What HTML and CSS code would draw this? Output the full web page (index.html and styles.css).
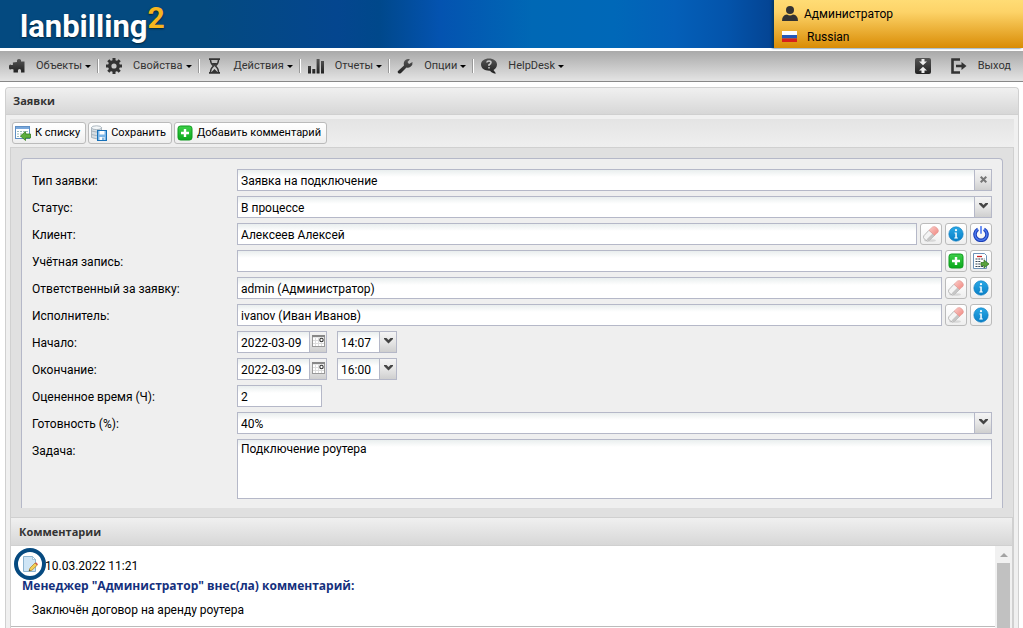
FILE: index.html
```html
<!DOCTYPE html>
<html lang="ru">
<head>
<meta charset="utf-8">
<title>Заявки</title>
<link rel="stylesheet" href="styles.css">
</head>
<body>
<svg class="defs" width="0" height="0" aria-hidden="true">
  <defs>
    <linearGradient id="pink" x1="0" y1="0" x2="1" y2="1"><stop offset="0" stop-color="#fbd0cc"/><stop offset="1" stop-color="#f0837c"/></linearGradient>
    <linearGradient id="blue" x1="0" y1="0" x2="0" y2="1"><stop offset="0" stop-color="#2aa9e6"/><stop offset="1" stop-color="#0a7fc6"/></linearGradient>
    <linearGradient id="green" x1="0" y1="0" x2="0" y2="1"><stop offset="0" stop-color="#3fd04a"/><stop offset="1" stop-color="#0aa81c"/></linearGradient>
    <linearGradient id="dark" x1="0" y1="0" x2="0" y2="1"><stop offset="0" stop-color="#555"/><stop offset="1" stop-color="#222"/></linearGradient>
    <symbol id="eraser" viewBox="0 0 16 16">
      <ellipse cx="7" cy="14.500" rx="6" ry="1.300" fill="#ccc" opacity=".7"/>
      <path d="M.8 9.800 6 4.200 11.500 9.500 6.500 14.300Q4.500 15.800 2 13.800-.5 11.500.8 9.800Z" fill="#f4f4f4" stroke="#aaa" stroke-width=".8"/>
      <path d="M3.500 13.500 9.500 7.500 11.500 9.500 6.500 14.300Q5 15.200 3.500 13.500Z" fill="#c6c6c6"/>
      <path d="M6 4.200 9.500 1Q11.500-.3 14 2 16.300 4.500 15 6.200L11.500 9.500Z" fill="url(#pink)" stroke="#e29a96" stroke-width=".6"/>
    </symbol>
    <symbol id="info" viewBox="0 0 16 16">
      <circle cx="8" cy="8" r="7.200" fill="url(#blue)" stroke="#0a78bd" stroke-width=".6"/>
      <circle cx="8" cy="4.200" r="1.100" fill="#fff"/><path d="M6.500 6.500H8.800V11.500H9.800V12.500H6.300V11.500H7.300V7.500H6.500Z" fill="#fff"/>
    </symbol>
    <symbol id="power" viewBox="0 0 16 16">
      <path d="M5 3.200A6 6 0 1 0 11 3.200" fill="none" stroke="#1c3fb8" stroke-width="3.600"/>
      <path d="M5 3.200A6 6 0 1 0 11 3.200" fill="none" stroke="#4d7cf0" stroke-width="1.400"/>
      <path d="M8 .8V7" stroke="#6f93f5" stroke-width="2" stroke-linecap="round"/>
    </symbol>
    <symbol id="plus" viewBox="0 0 16 16">
      <rect x="1" y="1" width="14" height="14" rx="2.500" fill="url(#green)" stroke="#0f9a1e"/>
      <path d="M8 4V12M4 8H12" stroke="#fff" stroke-width="2.400"/>
    </symbol>
    <symbol id="report" viewBox="0 0 16 16">
      <path d="M.5.5H11.500L13.500 2.500V15.500H.5Z" fill="#fff" stroke="#6e92b8"/>
      <path d="M4 3.500H9" stroke="#c22" stroke-width="1.300"/>
      <path d="M2.500 6H11.500M2.500 8.500H8M2.500 11H8M2.500 13.500H11" stroke="#345" stroke-width="1.100" stroke-dasharray="2 .8"/>
      <path d="M8 9.500H11V7L16 11 11 15V12.500H8Z" fill="#5aa33d" stroke="#2c6f1b" stroke-width=".7"/>
    </symbol>
    <symbol id="chev" viewBox="0 0 9 6"><path d="M0 0H2.500L4.500 2 6.500 0H9V1L4.500 5.500 0 1Z" fill="#444"/></symbol>
    <symbol id="cal" viewBox="0 0 13 12">
      <rect x=".5" y=".5" width="12" height="11" fill="#fff" stroke="#999"/><path d="M0 1H13" stroke="#888" stroke-width="2.400"/>
      <path d="M3.500 3V11M6.500 3V11M1 5.500H7M1 8.500H12M9.500 8V11" stroke="#ddd"/>
      <circle cx="9.500" cy="5" r="1.700" fill="#fff" stroke="#333" stroke-width="1.100"/>
    </symbol>
  </defs>
</svg>

<header class="banner">
  <div class="logo">lanbilling<span class="logo-two">2</span></div>
  <div class="account">
    <div class="account-row">
      <svg class="account-icon" viewBox="0 0 16 15"><circle cx="8" cy="4" r="4" fill="#333"/><path d="M0 15Q0 9 5 8.500 8 10.500 11 8.500 16 9 16 15Z" fill="#333"/></svg>
      <span>Администратор</span>
    </div>
    <div class="account-row">
      <svg class="account-icon" viewBox="0 0 16 15"><path d="M0 2H15V6H0Z" fill="#fff"/><path d="M0 6H15V9.500H0Z" fill="#2458b8"/><path d="M0 9.500H15V13H0Z" fill="#d8201c"/></svg>
      <span class="language">Russian</span>
    </div>
  </div>
</header>

<nav class="menu">
  <button class="menu-item" type="button"><svg class="menu-icon" viewBox="0 0 16 16"><path d="M0 8Q0 6.500 1.500 6.500 3 7.500 4 6.500L3.800 4.500 8 4Q7.500 1 10 1 12.500 1 12 3.500L15.500 3.500V14.500H12Q12.500 11 10.500 11 8.500 11 9 14.500H4.500L4.500 11.500Q3 10.500 1.500 11.500 0 11.500 0 10Z" fill="url(#dark)"/></svg>Объекты<i class="caret"></i></button>
  <button class="menu-item" type="button"><svg class="menu-icon" viewBox="0 0 16 16"><circle cx="8" cy="8" r="4.300" fill="none" stroke="#333" stroke-width="3.400"/><path d="M8 0V3M8 13V16M0 8H3M13 8H16M2.300 2.300 4.500 4.500M11.500 11.500 13.700 13.700M2.300 13.700 4.500 11.500M11.500 4.500 13.700 2.300" stroke="#333" stroke-width="3"/></svg>Свойства<i class="caret"></i></button>
  <button class="menu-item" type="button"><svg class="menu-icon" viewBox="-2 0 16 16"><path d="M0 1.200H11M0 14.800H11" stroke="#333" stroke-width="1.800"/><path d="M1.500 2Q1.500 5.500 4.500 8 1.500 10.500 1.500 14M9.500 2Q9.500 5.500 6.500 8 9.500 10.500 9.500 14" fill="none" stroke="#333" stroke-width="1.400"/><path d="M2.500 5H8.500L5.500 8ZM2.500 14 5.500 11 8.500 14Z" fill="#333"/></svg>Действия<i class="caret"></i></button>
  <button class="menu-item" type="button"><svg class="menu-icon" viewBox="0 0 16 16"><path d="M0 8H3V15.500H0ZM4.300 11H7.300V15.500H4.300ZM8.600 1H11.600V15.500H8.600ZM13 3H16V15.500H13Z" fill="url(#dark)"/></svg>Отчеты<i class="caret"></i></button>
  <button class="menu-item" type="button"><svg class="menu-icon" viewBox="0 0 16 16"><path d="M1 13 7 7.500Q6 4 8.500 2 10.500.5 13 1.300L10.500 4 12 6 15.500 4Q16 7 13.500 8.700 11.500 10 9.500 9.500L4 15Q2.500 16 1.200 15 0 14 1 13Z" fill="url(#dark)"/></svg>Опции<i class="caret"></i></button>
  <button class="menu-item" type="button"><svg class="menu-icon" viewBox="0 0 16 16"><path d="M8 .5C12.500.5 16 3 16 6.500 16 9 14.500 11 12.500 12L15 15.500Q11 15.500 9 12.700C4 13 0 10.500 0 6.500 0 3 3.500.5 8 .5Z" fill="url(#dark)"/><path d="M5.800 4.500Q6 3 8 3 10 3 10 4.600 10 6 8 6.800V8M8 9V10.500" fill="none" stroke="#ccc" stroke-width="1.500"/></svg>HelpDesk<i class="caret"></i></button>
  <span class="menu-space"></span>
  <button class="menu-tool" type="button" aria-label="Свернуть"><svg class="menu-icon" viewBox="0 0 16 16"><rect width="16" height="16" rx="2" fill="url(#dark)"/><path d="M6.500 1H9.500V3.500H12L8 7.300 4 3.500H6.500ZM6.500 15H9.500V12.500H12L8 8.700 4 12.500H6.500Z" fill="#eee"/></svg></button>
  <button class="menu-tool" type="button"><svg class="menu-icon" viewBox="0 0 16 16"><path d="M9 1.500H1.500V14.500H9" fill="none" stroke="#333" stroke-width="2.600"/><path d="M5 6.800H10.500V4L15.500 8 10.500 12V9.200H5Z" fill="#333"/></svg>Выход</button>
</nav>

<main class="panel">
  <h1 class="panel-title">Заявки</h1>
  <div class="panel-body">
    <div class="toolbar">
      <button class="btn" type="button"><svg class="icon" viewBox="0 0 16 16"><rect x=".5" y="1.500" width="14" height="12" fill="#fff" stroke="#5f8fc4"/><path d="M1 3H14" stroke="#79a8dc" stroke-width="2"/><path d="M2 6.500H13M2 9H12M2 11.500H8" stroke="#9bb" stroke-dasharray="2 1"/><path d="M5.500 11 10.500 6.500V9H15.500V13H10.500V15.500Z" fill="#5cae3e" stroke="#347f20" stroke-width=".8"/></svg>К списку</button>
      <button class="btn" type="button"><svg class="icon" viewBox="0 0 16 16"><path d="M.5 2.500V12.500Q5 15 10.500 12.500V2.500Z" fill="#d5dde3" stroke="#9aa8b2" stroke-width=".8"/><ellipse cx="5.500" cy="2.700" rx="5" ry="1.900" fill="#f4f7f9" stroke="#9aa8b2" stroke-width=".8"/><path d="M.5 6Q5 8 10.500 6M.5 9.500Q5 11.500 10.500 9.500" fill="none" stroke="#9aa8b2" stroke-width=".8"/><rect x="6.500" y="5.500" width="9" height="10" fill="#7db7e8" stroke="#1670b8"/><path d="M8.500 6H13.500V9.500H8.500ZM8.500 12H13.500V15H8.500Z" fill="#fff"/><path d="M11.500 12.500H12.500V15H11.500Z" fill="#1670b8"/></svg>Сохранить</button>
      <button class="btn" type="button"><svg class="icon"><use href="#plus"/></svg>Добавить комментарий</button>
    </div>

    <div class="form-area">
      <form class="form">
        <label class="label" for="type">Тип заявки:</label>
        <div class="row"><div class="combo"><input class="input" id="type" value="Заявка на подключение"><button class="trigger" type="button" aria-label="Очистить"><svg width="7" height="7" viewBox="0 0 7 7"><path d="M.7.7 6.300 6.300M6.300.7.7 6.300" stroke="#777" stroke-width="2"/></svg></button></div></div>

        <label class="label" for="status">Статус:</label>
        <div class="row"><div class="combo"><select class="input" id="status"><option>В процессе</option></select><span class="trigger"><svg width="9" height="6"><use href="#chev"/></svg></span></div></div>

        <label class="label" for="client">Клиент:</label>
        <div class="row"><input class="input" id="client" value="Алексеев Алексей"><button class="btn-icon" type="button" aria-label="Очистить"><svg class="icon"><use href="#eraser"/></svg></button><button class="btn-icon" type="button" aria-label="Информация"><svg class="icon"><use href="#info"/></svg></button><button class="btn-icon" type="button" aria-label="Состояние"><svg class="icon"><use href="#power"/></svg></button></div>

        <label class="label" for="acc">Учётная запись:</label>
        <div class="row"><input class="input" id="acc"><button class="btn-icon" type="button" aria-label="Добавить"><svg class="icon"><use href="#plus"/></svg></button><button class="btn-icon" type="button" aria-label="Перейти"><svg class="icon"><use href="#report"/></svg></button></div>

        <label class="label" for="resp">Ответственный за заявку:</label>
        <div class="row"><input class="input" id="resp" value="admin (Администратор)"><button class="btn-icon" type="button" aria-label="Очистить"><svg class="icon"><use href="#eraser"/></svg></button><button class="btn-icon" type="button" aria-label="Информация"><svg class="icon"><use href="#info"/></svg></button></div>

        <label class="label" for="exec">Исполнитель:</label>
        <div class="row"><input class="input" id="exec" value="ivanov (Иван Иванов)"><button class="btn-icon" type="button" aria-label="Очистить"><svg class="icon"><use href="#eraser"/></svg></button><button class="btn-icon" type="button" aria-label="Информация"><svg class="icon"><use href="#info"/></svg></button></div>

        <label class="label" for="start">Начало:</label>
        <div class="row row-times"><div class="combo date"><input class="input" id="start" value="2022-03-09"><button class="trigger" type="button" aria-label="Календарь"><svg width="13" height="12"><use href="#cal"/></svg></button></div><div class="combo time"><select class="input" aria-label="Время начала"><option>14:07</option></select><span class="trigger"><svg width="9" height="6"><use href="#chev"/></svg></span></div></div>

        <label class="label" for="end">Окончание:</label>
        <div class="row row-times"><div class="combo date"><input class="input" id="end" value="2022-03-09"><button class="trigger" type="button" aria-label="Календарь"><svg width="13" height="12"><use href="#cal"/></svg></button></div><div class="combo time"><select class="input" aria-label="Время окончания"><option>16:00</option></select><span class="trigger"><svg width="9" height="6"><use href="#chev"/></svg></span></div></div>

        <label class="label" for="hours">Оцененное время (Ч):</label>
        <div class="row"><input class="input hours" id="hours" value="2"></div>

        <label class="label" for="ready">Готовность (%):</label>
        <div class="row"><div class="combo"><select class="input" id="ready"><option>40%</option></select><span class="trigger"><svg width="9" height="6"><use href="#chev"/></svg></span></div></div>

        <label class="label" for="task">Задача:</label>
        <div class="row"><textarea class="input task" id="task">Подключение роутера</textarea></div>
      </form>
    </div>

    <section class="comments">
      <h2 class="comments-title">Комментарии</h2>
      <div class="comments-body">
        <article class="comment">
          <div class="comment-head">
            <button class="edit" type="button" aria-label="Редактировать"><svg class="icon" viewBox="0 0 16 16"><path d="M1.500.5H10.500L13.500 3.500V15.500H1.500Z" fill="#cfe5f5" stroke="#8db4d0"/><path d="M10.500.5V3.500H13.500Z" fill="#fff" stroke="#8db4d0" stroke-width=".7"/><path d="M7 15 8 12 13 7 15.200 9.200 10 14.200Z" fill="#f3cf57" stroke="#a98021" stroke-width=".7"/><path d="M13 7 14 6.300 16 8.200 15.200 9.200Z" fill="#d9534a"/><path d="M7 15 7.500 13.500 8.500 14.500Z" fill="#333"/></svg></button>
            <time>10.03.2022 11:21</time>
          </div>
          <h3 class="comment-author">Менеджер "Администратор" внес(ла) комментарий:</h3>
          <p class="comment-text">Заключён договор на аренду роутера</p>
        </article>
        <div class="scroll" aria-hidden="true"><i class="scroll-up"></i><div class="scroll-thumb"></div></div>
      </div>
    </section>
  </div>
</main>
</body>
</html>
```
FILE: styles.css
```css
* { box-sizing: border-box; }
html, body { height: 100%; }
body {
  margin: 0;
  display: flex;
  flex-direction: column;
  overflow: hidden;
  background: #fff;
  color: #000;
  font: 12px/16px Roboto, sans-serif;
}
button, input, select, textarea { font: inherit; color: inherit; margin: 0; }
.defs { position: absolute; }
svg { display: block; flex: none; }
h1, h2, h3, p { margin: 0; }
h1, h2, h3 { font-family: "Open Sans", sans-serif; }

.banner {
  flex: none;
  display: flex;
  justify-content: space-between;
  height: 48px;
  background: linear-gradient(90deg, #044a80 0, #044a80 20%, #04468f 33%, #00488b 37%, #0453b0 43%, #0068b5 52%, #0068b8 60%, #045fb8 66%, #0454ab 71%, #044290 76%);
}
.logo {
  display: flex;
  padding: 8px 0 0 20px;
  color: #fff;
  font: 700 31px/38px Roboto, sans-serif;
  text-shadow: 0 1px 2px #023;
}
.logo-two { color: #f6b51e; font-size: 30px; line-height: 20px; }
.account {
  flex: none;
  width: 249px;
  padding: 2px 8px;
  background: linear-gradient(#ffdc75, #fdd368 25%, #d98c05);
  box-shadow: -2px 0 2px #033a66;
}
.account-row { display: flex; align-items: center; gap: 6px; height: 23px; }
.account-icon { width: 16px; height: 15px; }
.language { padding-left: 3px; }

.menu {
  flex: none;
  display: flex;
  align-items: center;
  height: 31px;
  margin-top: 3px;
  padding: 0 12px 0 2px;
  border-bottom: 1px solid #888;
  background: linear-gradient(#a9a9a9, #e4e4e4);
  color: #333;
  font-size: 11px;
}
.menu-item, .menu-tool { display: flex; align-items: center; padding: 0; border: 0; background: none; }
.menu-item { height: 14px; padding: 0 7px; }
.menu-item + .menu-item { border-left: 1px solid #fff; box-shadow: -1px 0 #999; }
.menu-icon { width: 16px; height: 16px; margin-right: 11px; }
.caret { margin-left: 3px; border: 3px solid transparent; border-top-color: #000; border-bottom: 0; }
.menu-space { flex: 1; }
.menu-tool + .menu-tool { margin-left: 9px; }

.panel {
  flex: 1;
  min-height: 0;
  display: flex;
  flex-direction: column;
  margin: 5px 4px 0 5px;
  border: 1px solid #d0d0d0;
  border-bottom: 0;
  border-radius: 4px 4px 0 0;
  background: #f0f0f0;
}
.panel-title, .comments-title {
  flex: none;
  height: 27px;
  padding: 0 7px;
  border-bottom: 1px solid #d0d0d0;
  border-radius: 4px 4px 0 0;
  background: linear-gradient(#f0f0f0, #d7d7d7);
  color: #333;
  font-size: 11px;
  line-height: 26px;
}
.panel-body { flex: 1; min-height: 0; display: flex; flex-direction: column; padding: 4px 4px 0; }
.toolbar { flex: none; display: flex; gap: 2px; padding: 3px 2px; background: linear-gradient(#e4e4e4, #efefef); }
.btn, .btn-icon {
  display: flex;
  align-items: center;
  height: 22px;
  padding: 0 5px 0 2px;
  gap: 4px;
  border: 1px solid #bbb;
  border-radius: 3px;
  background: linear-gradient(#fff, #f9f9f9 50%, #eee);
  font-size: 11px;
}
.btn-icon { flex: none; width: 22px; padding: 0; justify-content: center; }
.icon { width: 16px; height: 16px; }

.form-area { flex: none; padding: 10px 10px 9px; border: 1px solid #d0d0d0; border-width: 1px 1px 0; background: #e0e0e0; }
.form {
  display: grid;
  grid-template-columns: 205px 1fr;
  row-gap: 5px;
  padding: 10px 10px 9px;
  border: 1px solid #b5b8c8;
  border-bottom: 0;
  border-radius: 4px 4px 0 0;
  background: #efefef;
}
.label { padding-top: 4px; }
.row { display: flex; gap: 3px; min-width: 0; }
.row-times { gap: 10px; }
.combo { flex: 1; display: flex; min-width: 0; }
.date { flex: none; width: 90px; }
.time { flex: none; width: 60px; }
.input {
  flex: 1;
  min-width: 0;
  width: 100%;
  height: 22px;
  padding: 2px 3px 0;
  border: 1px solid #b5b8c8;
  border-radius: 0;
  outline: 0;
  appearance: none;
  background: linear-gradient(#e9eeee, #fff 7px);
}
.trigger {
  flex: none;
  display: flex;
  align-items: center;
  justify-content: center;
  width: 17px;
  height: 22px;
  padding: 0 0 2px;
  border: 1px solid #b5b8c8;
  border-left: 0;
  background: linear-gradient(#f4f4f4, #e6e6e6 50%, #cfcfcf);
  pointer-events: none;
}
.hours { flex: none; width: 85px; }
.task { display: block; height: 60px; padding: 1px 3px; resize: none; }

.comments {
  flex: 1;
  min-height: 0;
  display: flex;
  flex-direction: column;
  border: solid #d0d0d0;
  border-width: 1px 2px 0 1px;
}
.comments-title { height: 28px; padding: 0 8px; border-radius: 0; line-height: 28px; }
.comments-body { flex: 1; min-height: 0; display: flex; background: #fff; }
.comment { flex: 1; height: 81px; border-bottom: 1px solid #bbb; }
.comment-head { display: flex; position: relative; padding: 12px 0 0 34px; }
.edit {
  position: absolute;
  left: 3px;
  top: 2px;
  display: flex;
  align-items: center;
  justify-content: center;
  width: 32px;
  height: 32px;
  padding: 0;
  border: 4px solid #064a80;
  border-radius: 50%;
  background: #fff;
}
.comment-author { padding: 4px 11px 0; color: #15307d; font-size: 12px; line-height: 16px; }
.comment-text { padding: 8px 21px 0; }
.scroll { flex: none; width: 17px; display: flex; flex-direction: column; align-items: center; background: #f1f1f1; }
.scroll-up { margin: 7px 0 6px; border: 4px solid transparent; border-top: 0; border-bottom-color: #a3a3a3; }
.scroll-thumb { flex: 1; width: 13px; background: #c1c1c1; }
```
